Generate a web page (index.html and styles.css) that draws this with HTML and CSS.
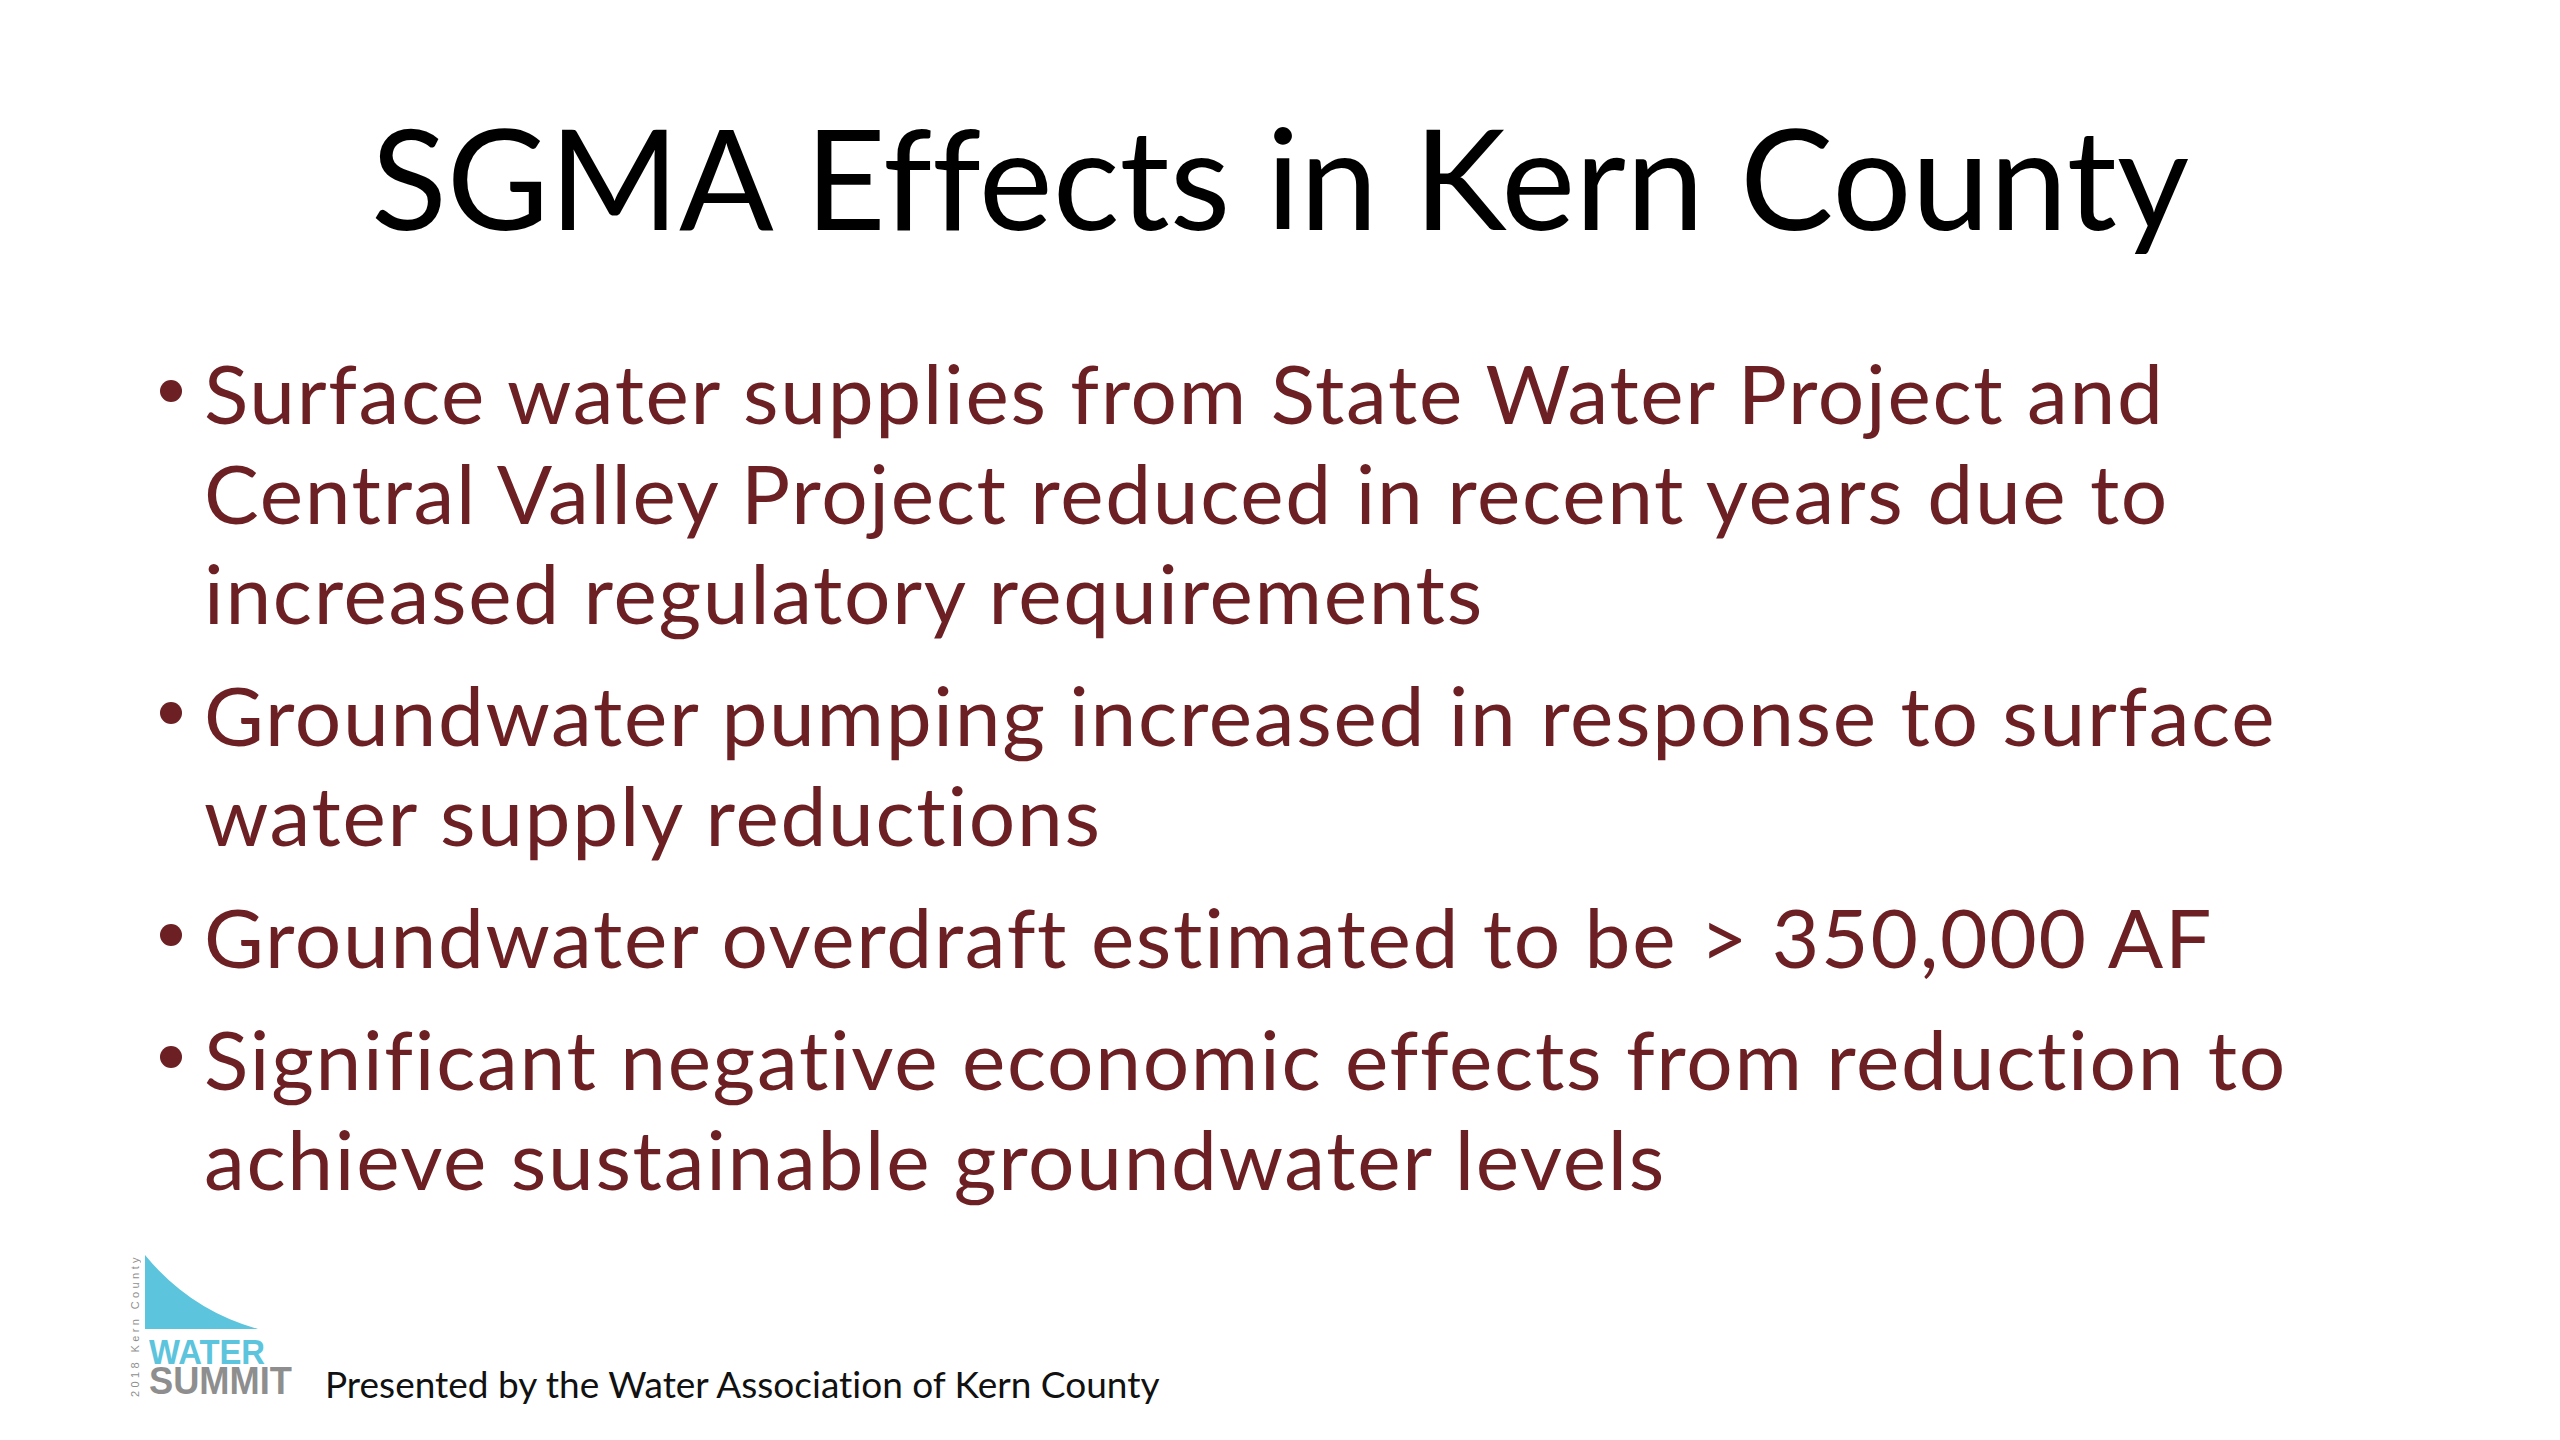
FILE: index.html
```html
<!DOCTYPE html>
<html lang="en">
<head>
<meta charset="utf-8">
<title>SGMA Effects in Kern County</title>
<link rel="stylesheet" href="styles.css">
</head>
<body>
<div class="slide">
  <h1 class="title">SGMA Effects in Kern County</h1>
  <ul class="points">
    <li class="point"><span class="point-text">Surface water supplies from State Water Project and<br>Central Valley Project reduced in recent years due to<br>increased regulatory requirements</span></li>
    <li class="point"><span class="point-text">Groundwater pumping increased in response to surface<br>water supply reductions</span></li>
    <li class="point"><span class="point-text">Groundwater overdraft estimated to be &gt; 350,000 AF</span></li>
    <li class="point"><span class="point-text">Significant negative economic effects from reduction to<br>achieve sustainable groundwater levels</span></li>
  </ul>
  <footer class="footer">
    <div class="logo">
      <span class="logo-year">2018 Kern County</span>
      <svg class="logo-mark" width="154" height="165" viewBox="0 0 154 165" aria-label="Water Summit">
        <path class="logo-tri" d="M5 7 Q50 62 118 81 L5 81 Z"/>
        <text class="logo-water" x="9" y="116" textLength="116" lengthAdjust="spacingAndGlyphs">WATER</text>
        <text class="logo-summit" x="9" y="146" textLength="143" lengthAdjust="spacingAndGlyphs">SUMMIT</text>
      </svg>
    </div>
    <p class="presented">Presented by the Water Association of Kern County</p>
  </footer>
</div>
</body>
</html>
```

FILE: styles.css
```css
html, body {
  margin: 0;
  padding: 0;
  background: #ffffff;
}

.slide {
  width: 2560px;
  height: 1440px;
  display: flex;
  flex-direction: column;
  background: #ffffff;
  font-family: "Lato", "Open Sans", "Liberation Sans", sans-serif;
  font-variant-ligatures: none;
  overflow: hidden;
}

.title {
  margin: 0;
  padding-top: 106px;
  font-size: 140px;
  line-height: 140px;
  font-weight: 400;
  color: #000000;
  text-align: center;
  white-space: nowrap;
}

.points {
  list-style: none;
  margin: 96px 0 0 0;
  padding: 0 0 0 160px;
  display: flex;
  flex-direction: column;
  gap: 22px;
}

.point {
  display: flex;
  align-items: flex-start;
  font-size: 82px;
  line-height: 100px;
  letter-spacing: 1.7px;
  color: #6c2023;
  white-space: nowrap;
}

.point::before {
  content: "";
  flex: none;
  width: 22px;
  height: 22px;
  border-radius: 50%;
  background: #6c2023;
  margin-top: 38px;
  margin-right: 22px;
}

.footer {
  margin-top: auto;
  display: flex;
  align-items: flex-end;
  gap: 31px;
  padding: 0 0 27px 130px;
}

.logo {
  display: flex;
  align-items: flex-end;
  flex: none;
}

.logo-year {
  display: block;
  writing-mode: vertical-rl;
  transform: rotate(180deg);
  font-family: "Liberation Sans", sans-serif;
  font-size: 11px;
  line-height: 10px;
  letter-spacing: 3.4px;
  color: #8f8f8f;
  white-space: nowrap;
  margin-bottom: 16px;
}

.logo-mark {
  display: block;
  flex: none;
}

.logo-tri {
  fill: #5cc4dc;
}

.logo-water {
  font-family: "Liberation Sans", sans-serif;
  font-weight: 700;
  font-size: 35px;
  fill: #5cc4dc;
}

.logo-summit {
  font-family: "Liberation Sans", sans-serif;
  font-weight: 700;
  font-size: 38px;
  fill: #8e8e8e;
}

.presented {
  margin: 0 0 10px 0;
  font-size: 37px;
  line-height: 38px;
  color: #111111;
  white-space: nowrap;
}
```
